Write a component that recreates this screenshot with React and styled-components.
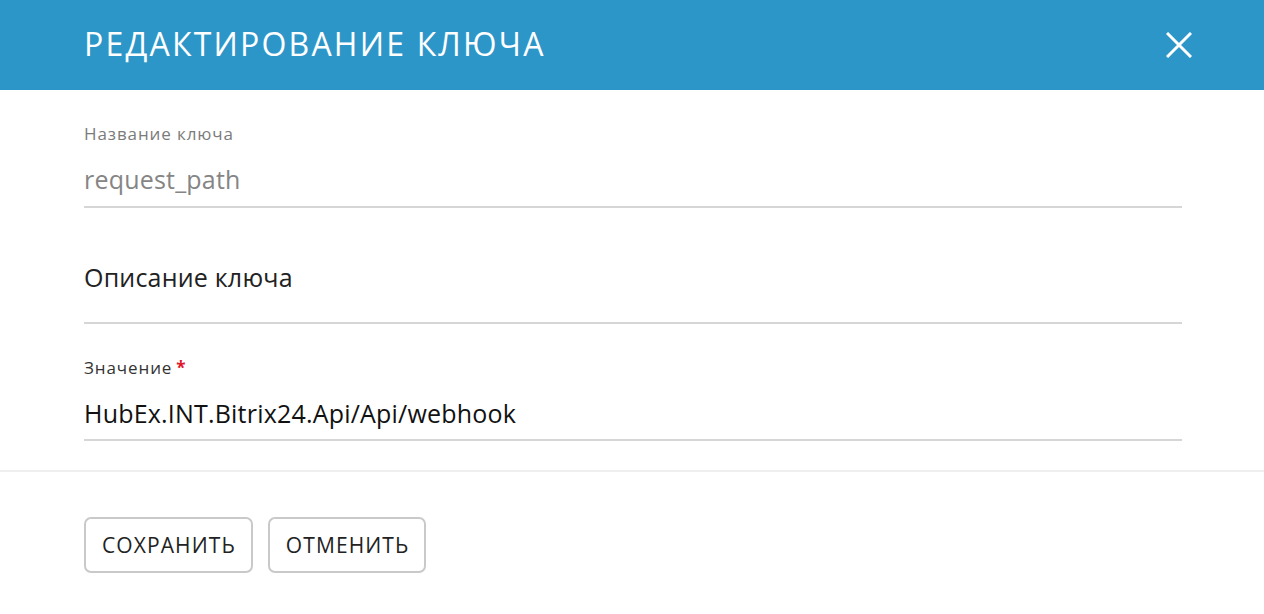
import React from "react";
import styled, { createGlobalStyle } from "styled-components";

const GlobalStyle = createGlobalStyle`
  body {
    margin: 0;
    background: #ffffff;
    font-family: "Open Sans", "Noto Sans", sans-serif;
  }
`;

const Modal = styled.div`
  width: 1264px;
  background: #ffffff;
`;

const Header = styled.div`
  height: 90px;
  background-color: #2d96c8;
  display: flex;
  align-items: center;
  justify-content: space-between;
  padding: 0 72px 0 84px;
  box-sizing: border-box;
`;

const Title = styled.h1`
  margin: 0 0 4px;
  font-size: 32px;
  font-weight: 400;
  color: #ffffff;
  letter-spacing: 2.2px;
`;

const CloseBtn = styled.button`
  width: 26px;
  height: 26px;
  padding: 0;
  border: none;
  background: none;
  cursor: pointer;
  display: flex;
  align-items: center;
  justify-content: center;
`;

const Body = styled.div`
  padding: 0 82px 29px 84px;
`;

const Field = styled.div`
  padding-top: ${(p) => p.$top}px;
  padding-bottom: ${(p) => p.$bottom}px;
  border-bottom: 2px solid #d6d6d6;
`;

const Label = styled.div`
  font-size: 17px;
  line-height: 20px;
  letter-spacing: 0.9px;
  color: ${(p) => (p.$muted ? "#7b7b7b" : "#333333")};
  margin-bottom: 17px;
`;

const Required = styled.span`
  color: #e0162b;
  margin-left: 4px;
  font-weight: 700;
`;

const Value = styled.div`
  font-size: 25px;
  line-height: 36px;
  letter-spacing: 0.2px;
  color: ${(p) => p.$color};
`;

const Footer = styled.div`
  border-top: 2px solid #efefef;
  padding: 45px 84px 40px;
  display: flex;
  gap: 15px;
`;

const Button = styled.button`
  height: 56px;
  padding: 0 15px 0 16px;
  border: 2px solid #c9c9c9;
  border-radius: 7px;
  background: #ffffff;
  font-family: inherit;
  font-size: 21px;
  letter-spacing: 1.1px;
  color: #222222;
  text-transform: uppercase;
  cursor: pointer;
`;

function App() {
  return (
    <Modal>
      <GlobalStyle />
      <Header>
        <Title>РЕДАКТИРОВАНИЕ КЛЮЧА</Title>
        <CloseBtn aria-label="Закрыть">
          <svg width="26" height="26" viewBox="0 0 26 26">
            <path d="M1 1 L25 25 M25 1 L1 25" stroke="#ffffff" strokeWidth="3" />
          </svg>
        </CloseBtn>
      </Header>
      <Body>
        <Field $top={34} $bottom={9}>
          <Label $muted>Название ключа</Label>
          <Value $color="#858585">request_path</Value>
        </Field>
        <Field $top={51} $bottom={27}>
          <Value $color="#222222">Описание ключа</Value>
        </Field>
        <Field $top={34} $bottom={8}>
          <Label>
            Значение<Required>*</Required>
          </Label>
          <Value $color="#111111">HubEx.INT.Bitrix24.Api/Api/webhook</Value>
        </Field>
      </Body>
      <Footer>
        <Button>Сохранить</Button>
        <Button>Отменить</Button>
      </Footer>
    </Modal>
  );
}

export default App;
